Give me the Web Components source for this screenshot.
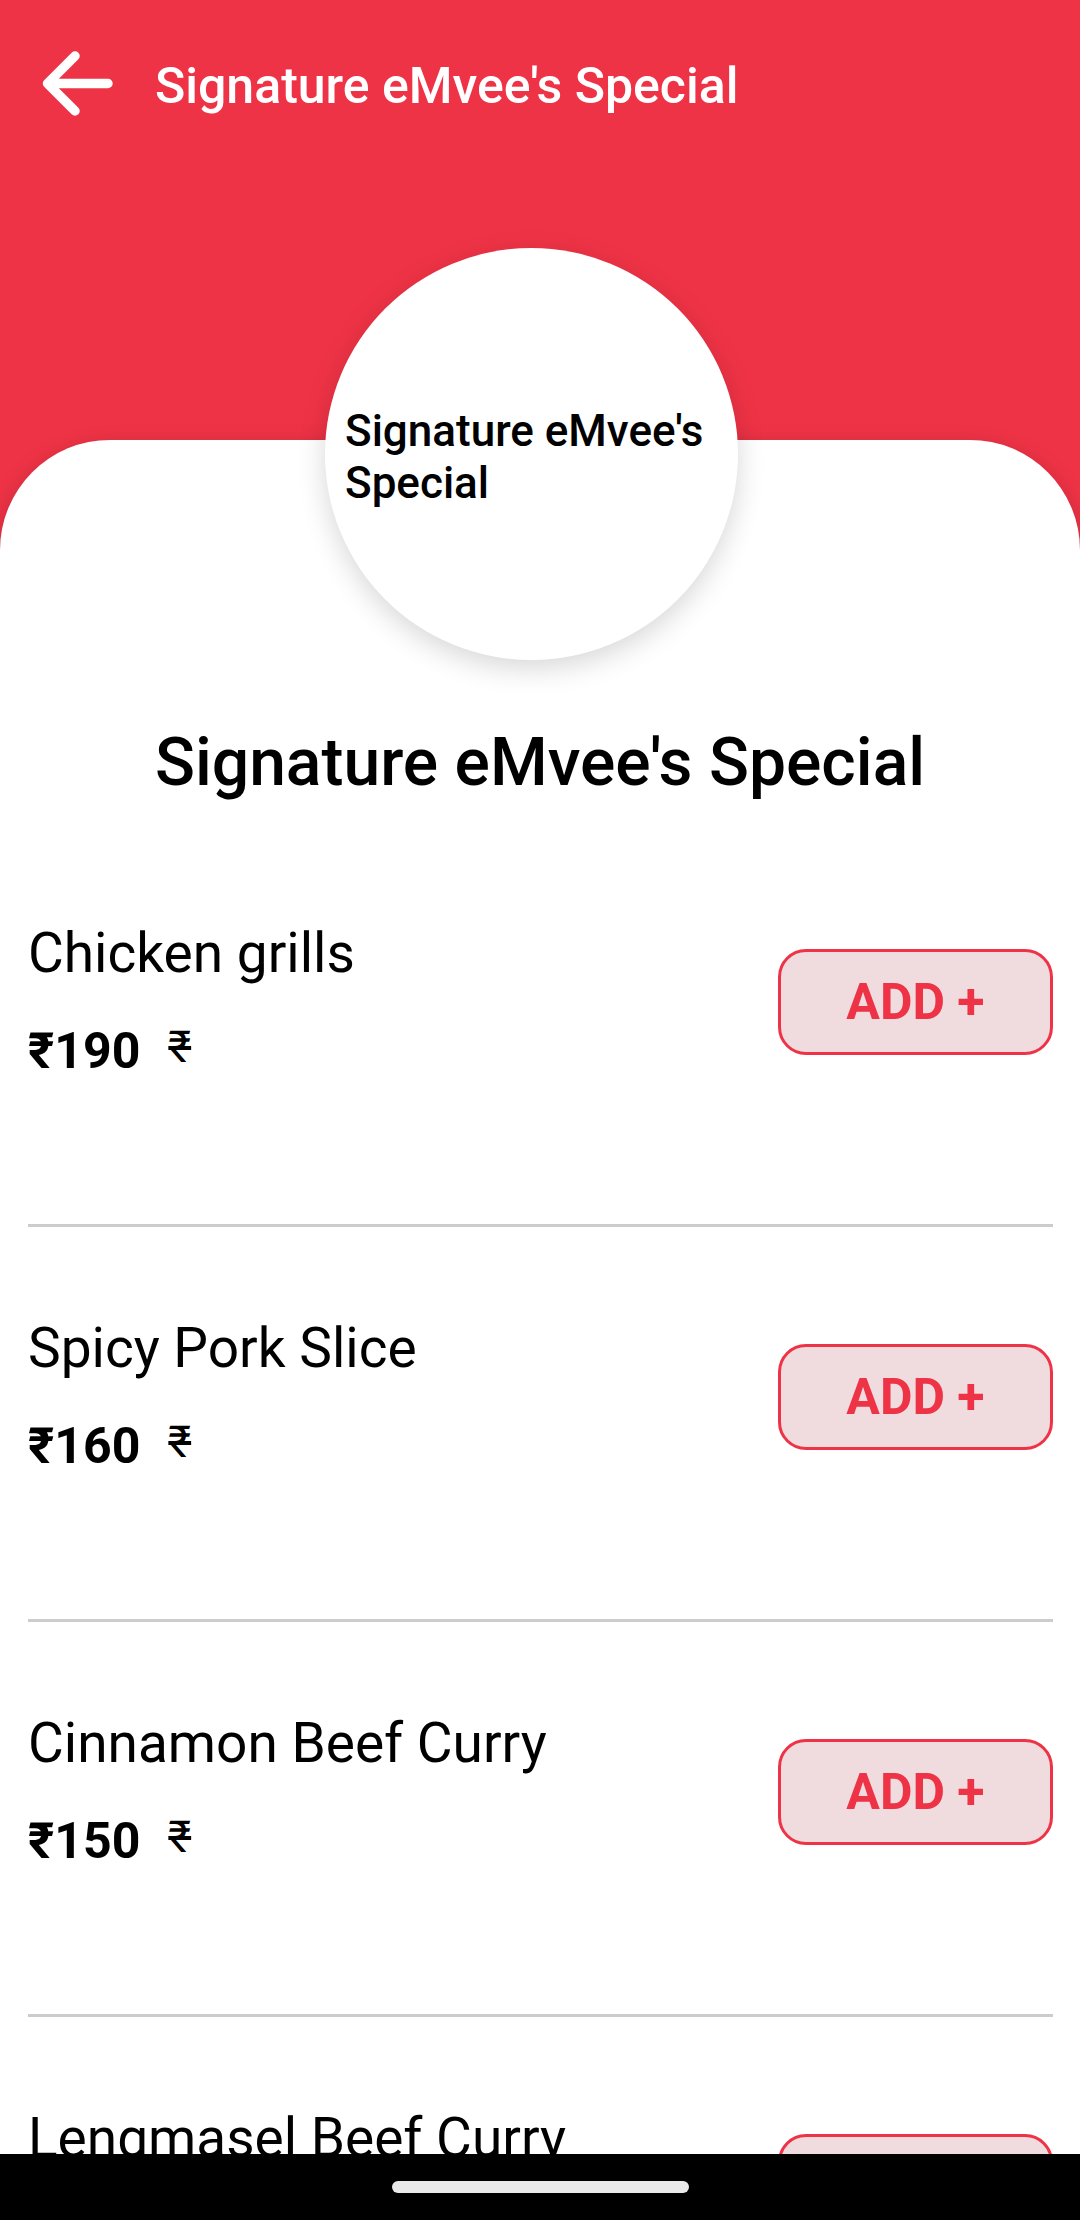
<!DOCTYPE html>
<html lang="en">
<head>
<meta charset="utf-8">
<meta name="viewport" content="width=device-width, initial-scale=1">
<title>Signature eMvee's Special</title>
<style>
  body { margin: 0; font-family: Roboto, "Noto Sans", sans-serif; color: #000; }
</style>
</head>
<body>
<menu-screen>
  <top-bar slot="header">Signature eMvee's Special</top-bar>
  <category-badge slot="badge">Signature eMvee's Special</category-badge>
  <span slot="title">Signature eMvee's Special</span>
  <menu-item price="₹190">Chicken grills</menu-item>
  <menu-item price="₹160">Spicy Pork Slice</menu-item>
  <menu-item price="₹150">Cinnamon Beef Curry</menu-item>
  <menu-item>Lengmasel Beef Curry</menu-item>
</menu-screen>

<template id="menu-screen">
  <style>
    :host {
      display: flex; flex-direction: column; height: 100vh; overflow: hidden;
      background: #ef3346;
    }
    header { flex: none; min-height: 440px; }
    main {
      position: relative; flex: 1; min-height: 0;
      display: flex; flex-direction: column;
      background: #fff; border-radius: 110px 110px 0 0;
      box-shadow: 0 6px 22px rgba(0, 0, 0, .2);
    }
    .badge { position: absolute; top: -192px; left: calc(50% - 215px); }
    h1 {
      margin: 0; padding: 284px 28px 30px; text-align: center;
      font-size: 66px; line-height: 78px; font-weight: 500;
    }
    .list { flex: 1; min-height: 0; overflow: hidden; padding: 0 27px 0 28px; }
    footer {
      position: relative; flex: none; height: 66px; background: #000;
      display: flex; align-items: center; justify-content: center;
    }
    .pill { width: 297px; height: 12px; border-radius: 6px; background: #eaeaea; }
  </style>
  <header><slot name="header"></slot></header>
  <main>
    <div class="badge"><slot name="badge"></slot></div>
    <h1><slot name="title"></slot></h1>
    <div class="list"><slot></slot></div>
  </main>
  <footer><div class="pill"></div></footer>
</template>

<template id="top-bar">
  <style>
    :host {
      display: flex; align-items: center; gap: 41px; height: 172px; padding: 0 42px;
      color: #fff; font-size: 50px; line-height: 58px; font-weight: 500;
    }
    button { flex: none; padding: 0; border: 0; background: none; color: inherit; }
    svg { display: block; }
  </style>
  <button type="button" aria-label="Back">
    <svg width="72" height="70" viewBox="0 0 72 70" fill="none" stroke="currentColor"
         stroke-width="9.5" stroke-linecap="round" stroke-linejoin="round">
      <path d="M33 5 L5.500 32.5 L33 60 M7 32.5 H66"/>
    </svg>
  </button>
  <span><slot></slot></span>
</template>

<template id="category-badge">
  <style>
    :host {
      display: flex; align-items: center; box-sizing: border-box;
      width: 413px; height: 412px; padding: 6px 20px 0;
      border-radius: 50%; background: #fff;
      box-shadow: 0 8px 28px rgba(0, 0, 0, .16);
      font-size: 44px; line-height: 52px; font-weight: 500;
    }
  </style>
  <span><slot></slot></span>
</template>

<template id="menu-item">
  <style>
    :host {
      display: flex; align-items: flex-start; justify-content: space-between;
      padding: 91px 0 143px; border-bottom: 3px solid #ccc;
    }
    .info { display: flex; flex-direction: column; gap: 38px; min-height: 158px; }
    .name { font-size: 55px; line-height: 60px; }
    .prices { display: flex; align-items: flex-start; gap: 28px; }
    .price { font-size: 50px; line-height: 60px; font-weight: 700; }
    .old { font-size: 44px; line-height: 52px; }
    button {
      align-self: center; box-sizing: border-box; width: 275px; height: 106px; padding: 0;
      border: 3px solid #ef3346; border-radius: 28px;
      background: #f0dcde; color: #ef3346;
      font-family: inherit; font-size: 50px; line-height: 58px; font-weight: 700;
    }
  </style>
  <div class="info">
    <span class="name"><slot></slot></span>
    <div class="prices"><span class="price"></span><s class="old">₹</s></div>
  </div>
  <button type="button">ADD +</button>
</template>

<script>
  class TemplateElement extends HTMLElement {
    constructor() {
      super();
      const template = document.getElementById(this.localName);
      this.attachShadow({ mode: "open" }).append(template.content.cloneNode(true));
    }
  }

  class MenuItem extends TemplateElement {
    connectedCallback() {
      const price = this.getAttribute("price");
      if (price) this.shadowRoot.querySelector(".price").textContent = price;
      else this.shadowRoot.querySelector(".prices").remove();
    }
  }

  customElements.define("menu-screen", class extends TemplateElement {});
  customElements.define("top-bar", class extends TemplateElement {});
  customElements.define("category-badge", class extends TemplateElement {});
  customElements.define("menu-item", MenuItem);
</script>
</body>
</html>
